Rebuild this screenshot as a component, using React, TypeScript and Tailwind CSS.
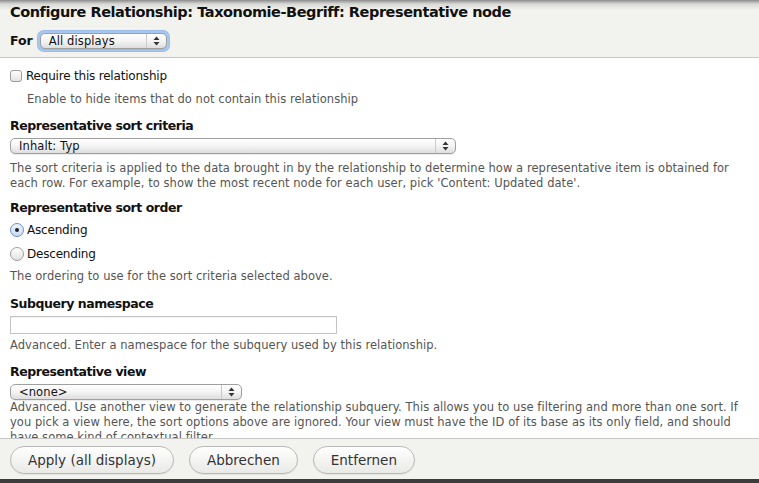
import React from "react";

const font = "font-['DejaVu_Sans',sans-serif]";

function Arrows() {
  return (
    <svg width="7" height="10" viewBox="0 0 7 10" className="shrink-0">
      <path d="M3.5 0.5 L6.5 4 H0.5 Z" fill="#333" />
      <path d="M3.5 9.5 L6.5 6 H0.5 Z" fill="#333" />
    </svg>
  );
}

function Select({ value, width }: { value: string; width: string }) {
  return (
    <div
      className={`flex h-[16px] items-stretch rounded-[5px] border border-[#9f9f9f] bg-gradient-to-b from-white via-[#f4f4f4] to-[#dedede] shadow-[0_1px_0_rgba(0,0,0,0.08)] ${width}`}
    >
      <span className="flex-1 truncate pl-[8px] text-[11.5px] leading-[14px] tracking-[0.1px] text-[#111]">
        {value}
      </span>
      <span className="flex w-[20px] items-center justify-center border-l border-[#c9c9c9]">
        <Arrows />
      </span>
    </div>
  );
}

function Heading({ children, mt }: { children: React.ReactNode; mt: string }) {
  return (
    <div className={`${mt} text-[12.5px] font-bold leading-[18px] tracking-[-0.45px] text-[#111]`}>
      {children}
    </div>
  );
}

function Desc({ lines, mt, indent }: { lines: string[]; mt: string; indent?: boolean }) {
  return (
    <div
      className={`${mt} ${indent ? "pl-[17px]" : ""} whitespace-nowrap text-[11.5px] leading-[15px] tracking-[0.05px] text-[#555]`}
    >
      {lines.map((l, i) => (
        <div key={i}>{l}</div>
      ))}
    </div>
  );
}

function Radio({ checked, label, mt }: { checked?: boolean; label: string; mt: string }) {
  return (
    <div className={`${mt} flex h-[20px] items-center gap-[3px]`}>
      <span
        className={`flex h-[14px] w-[14px] items-center justify-center rounded-full border ${
          checked
            ? "border-[#6a8fc8] bg-gradient-to-b from-[#eef4fc] to-[#c9dcf3]"
            : "border-[#9d9d9d] bg-gradient-to-b from-white to-[#e2e2e2]"
        }`}
      >
        {checked && <span className="h-[4px] w-[4px] rounded-full bg-[#222]" />}
      </span>
      <span className="text-[12px] tracking-[-0.2px] text-[#111]">{label}</span>
    </div>
  );
}

function Button({ children }: { children: React.ReactNode }) {
  return (
    <button className="h-[28px] rounded-full border border-[#b9b9b9] bg-gradient-to-b from-white to-[#e9e9e6] px-[17px] text-[13.5px] text-[#333] shadow-[0_1px_1px_rgba(0,0,0,0.06)]">
      {children}
    </button>
  );
}

export default function App() {
  return (
    <div className={`flex h-[483px] w-[759px] flex-col overflow-hidden bg-white ${font}`}>
      {/* header */}
      <div className="h-[58px] shrink-0 border-b border-[#c6c6c6] bg-[#f2f2ee] bg-[linear-gradient(to_bottom,#8c8c8c_0px,#d8d8d5_4px,#f2f2ee_10px)] px-[10px]">
        <div className="pt-[3px] text-[14.5px] font-bold leading-[18px] tracking-[-0.45px] text-[#111]">
          Configure Relationship: Taxonomie-Begriff: Representative node
        </div>
        <div className="mt-[10px] flex items-center gap-[5px]">
          <span className="text-[12.5px] font-bold text-[#111]">For</span>
          <div className="rounded-[6px] p-[2px] shadow-[0_0_0_1px_#9cbde8] bg-[#a9c8f0]">
            <Select value="All displays" width="w-[127px]" />
          </div>
        </div>
      </div>

      {/* scrollable form */}
      <div className="h-[380px] shrink-0 overflow-hidden px-[10px]">
        <div className="mt-[9px] flex h-[18px] items-center gap-[4px]">
          <span className="h-[12px] w-[12px] rounded-[3px] border border-[#9d9d9d] bg-gradient-to-b from-white to-[#e2e2e2]" />
          <span className="text-[12px] tracking-[-0.2px] text-[#111]">Require this relationship</span>
        </div>
        <Desc indent mt="mt-[7px]" lines={["Enable to hide items that do not contain this relationship"]} />

        <Heading mt="mt-[10px]">Representative sort criteria</Heading>
        <div className="mt-[3px]">
          <Select value="Inhalt: Typ" width="w-[446px]" />
        </div>
        <Desc
          mt="mt-[7px]"
          lines={[
            "The sort criteria is applied to the data brought in by the relationship to determine how a representative item is obtained for",
            "each row. For example, to show the most recent node for each user, pick 'Content: Updated date'.",
          ]}
        />

        <Heading mt="mt-[8px]">Representative sort order</Heading>
        <Radio checked label="Ascending" mt="mt-[3px]" />
        <Radio label="Descending" mt="mt-[4px]" />
        <Desc mt="mt-[5px]" lines={["The ordering to use for the sort criteria selected above."]} />

        <Heading mt="mt-[11px]">Subquery namespace</Heading>
        <div className="mt-[3px] h-[18px] w-[327px] border border-[#c4c4c4] bg-white shadow-[inset_0_1px_1px_rgba(0,0,0,0.06)]" />
        <Desc mt="mt-[4px]" lines={["Advanced. Enter a namespace for the subquery used by this relationship."]} />

        <Heading mt="mt-[10px]">Representative view</Heading>
        <div className="mt-[3px]">
          <Select value="<none>" width="w-[232px]" />
        </div>
        <Desc
          mt="mt-0"
          lines={[
            "Advanced. Use another view to generate the relationship subquery. This allows you to use filtering and more than one sort. If",
            "you pick a view here, the sort options above are ignored. Your view must have the ID of its base as its only field, and should",
            "have some kind of contextual filter.",
          ]}
        />
      </div>

      {/* footer */}
      <div className="flex h-[41px] shrink-0 items-start gap-[15px] border-t border-[#c6c6c6] bg-[#f2f2ee] px-[10px] pt-[7px]">
        <Button>Apply (all displays)</Button>
        <Button>Abbrechen</Button>
        <Button>Entfernen</Button>
      </div>
      <div className="flex-1 bg-[#3c3c3c]" />
    </div>
  );
}
